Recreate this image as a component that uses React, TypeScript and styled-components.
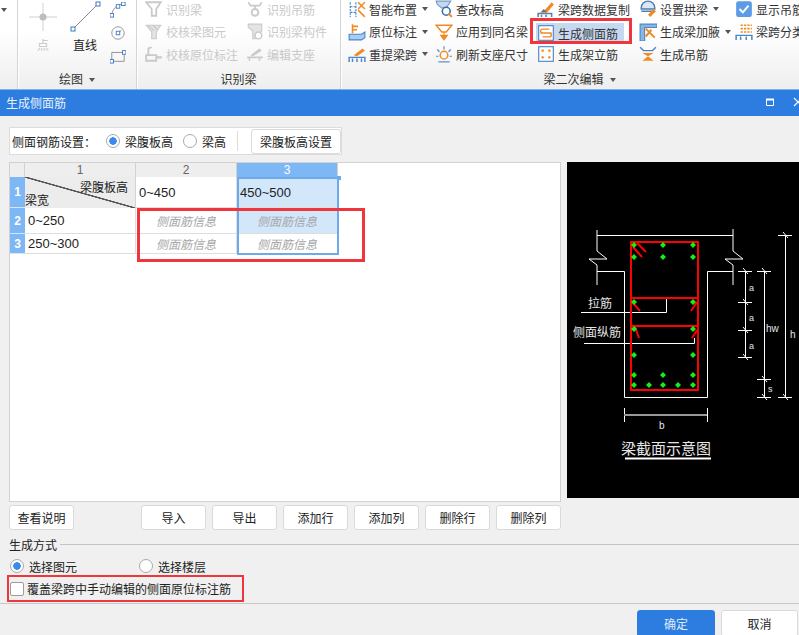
import React from 'react';
import styled, { createGlobalStyle } from 'styled-components';

const CJK = `"Liberation Sans", "Noto Sans CJK SC", sans-serif`;

const GlobalStyle = createGlobalStyle`
  html, body { margin: 0; padding: 0; background: #f0f0f0; }
  * { box-sizing: border-box; }
`;

const Page = styled.div`
  width: 799px;
  height: 635px;
  overflow: hidden;
  display: flex;
  flex-direction: column;
  font-family: ${CJK};
  font-size: 12px;
  color: #222;
  background: #f0f0f0;
`;

// ---- ribbon ----
const Ribbon = styled.div`
  height: 89px;
  display: flex;
  background: linear-gradient(#ffffff 35%, #eeeeee);
`;

const Group = styled.div<{ $w: number }>`
  width: ${(p) => p.$w}px;
  flex: none;
  display: flex;
  flex-direction: column;
  border-right: 1px solid #d4d4d4;
  box-shadow: 1px 0 0 #fff;
  &:last-child { border-right: 0; box-shadow: none; }
`;

const GroupBody = styled.div<{ $pad?: number }>`
  flex: 1;
  display: flex;
  min-height: 0;
  padding-left: ${(p) => p.$pad ?? 0}px;
`;

const GroupLabel = styled.div<{ $shift?: number }>`
  height: 20px;
  margin-bottom: -1px;
  padding-left: ${(p) => p.$shift ?? 0}px;
  display: flex;
  align-items: center;
  justify-content: center;
  gap: 6px;
  color: #333;
  line-height: 20px;
`;

const Caret = styled.span`
  width: 0;
  height: 0;
  border-left: 3px solid transparent;
  border-right: 3px solid transparent;
  border-top: 4px solid #555;
  flex: none;
`;

const ItemCaret = styled(Caret)`
  margin-left: 2px;
`;

const Col = styled.div<{ $w: number }>`
  width: ${(p) => p.$w}px;
  flex: none;
  margin-top: -1px;
  display: grid;
  grid-auto-rows: 22.5px;
  align-content: start;
`;

const Item = styled.div<{ $off?: boolean; $active?: boolean }>`
  position: relative;
  display: flex;
  align-items: center;
  gap: 3px;
  height: 20px;
  white-space: nowrap;
  color: ${(p) => (p.$off ? '#c9c9c9' : '#333')};
  ${(p) => p.$active && `
    background: #c6d9f1;
    margin: 1.5px 0 0 -1px;
    width: 88px;
    padding-left: 1px;
    &::after {
      content: '';
      position: absolute;
      left: -6px; right: -8px; top: -5px; bottom: -1px;
      border: 3px solid #f0363d;
    }
  `}
`;

const ItemIcon = styled.svg`
  flex: none;
`;

const PointTool = styled.div`
  width: 42px;
  display: flex;
  flex-direction: column;
  align-items: center;
  gap: 2px;
  color: #c4c4c4;
`;

const LineTool = styled(PointTool)`
  color: #222;
`;

const MiniTools = styled.div`
  margin-left: 4px;
  display: flex;
  flex-direction: column;
  gap: 7px;
  padding-top: 2px;
`;

// ---- title bar ----
const TitleBar = styled.div`
  height: 27px;
  flex: none;
  background: #2d7de0;
  border-top: 1px solid #7fb2ee;
  color: #e8f1fc;
  padding: 0 0 2px 6px;
  display: flex;
  align-items: center;
  justify-content: space-between;
`;

const WindowButtons = styled.div`
  display: flex;
  align-items: center;
  gap: 18px;
  margin-right: -4px;
`;

// ---- dialog body ----
const Body = styled.div`
  flex: 1;
  padding: 11px 0 0 9px;
  display: flex;
  flex-direction: column;
  min-height: 0;
`;

const SettingBox = styled.div`
  width: 333px;
  height: 28px;
  flex: none;
  background: #fff;
  border: 1px solid #dcdcdc;
  display: flex;
  align-items: center;
  padding-left: 2px;
`;

const SettingLabel = styled.span`
  width: 94px;
  flex: none;
`;

const RadioLabel = styled.label<{ $w: number }>`
  width: ${(p) => p.$w}px;
  flex: none;
  display: flex;
  align-items: center;
  gap: 5px;
  white-space: nowrap;
`;

const RadioDot = styled.span<{ $on?: boolean }>`
  width: 14px;
  height: 14px;
  flex: none;
  border-radius: 50%;
  border: 1px solid #a9a9a9;
  background: ${(p) => (p.$on ? 'radial-gradient(circle, #3a8af0 0 3.5px, #fff 4px)' : '#fff')};
`;

const Divider = styled.span`
  width: 1px;
  height: 20px;
  background: #dcdcdc;
  margin: 0 13px 0 0;
  flex: none;
`;

const Button = styled.button<{ $w?: number; $primary?: boolean }>`
  width: ${(p) => p.$w ?? 65}px;
  height: 25px;
  flex: none;
  padding: 0;
  font: inherit;
  color: ${(p) => (p.$primary ? '#dfeafa' : '#222')};
  background: ${(p) => (p.$primary ? '#2d7de0' : '#fff')};
  border: 1px solid ${(p) => (p.$primary ? '#2d7de0' : '#dadada')};
  border-radius: 3px;
`;

const MainRow = styled.div`
  margin-top: 7px;
  height: 340px;
  flex: none;
  display: flex;
  gap: 6px;
`;

const TablePanel = styled.div`
  position: relative;
  width: 552px;
  flex: none;
  background: #fff;
  border: 1px solid #d2d2d2;
`;

const Grid = styled.div`
  display: grid;
  grid-template-columns: 15px 111px 101px 101px;
  grid-template-rows: 14px 31px 26px 20px;
  width: 328px;
  font-size: 13px;
`;

const ColHead = styled.div<{ $on?: boolean }>`
  display: flex;
  align-items: center;
  justify-content: center;
  font-size: 12px;
  color: ${(p) => (p.$on ? '#fff' : '#666')};
  background: ${(p) => (p.$on ? '#7db7f5' : '#eeeeee')};
  border-right: 1px solid #d2d2d2;
`;

const RowHead = styled.div`
  display: flex;
  align-items: center;
  justify-content: center;
  background: #7db7f5;
  color: #fff;
  font-weight: bold;
  font-size: 12px;
  border-bottom: 1px solid #d6e6f8;
`;

const Corner = styled.div`
  position: relative;
  background:
    linear-gradient(to top right, transparent calc(50% - 1px), #555 calc(50% - 0.5px), #555 calc(50% + 0.5px), transparent calc(50% + 1px)),
    #ececec;
  border-right: 1px solid #d2d2d2;
  font-size: 12px;
`;

const CornerTop = styled.span`
  position: absolute;
  right: 7px;
  top: 1px;
`;

const CornerBottom = styled.span`
  position: absolute;
  left: 0;
  bottom: 0;
`;

const Cell = styled.div<{ $on?: boolean; $hint?: boolean }>`
  display: flex;
  align-items: center;
  justify-content: ${(p) => (p.$hint ? 'center' : 'flex-start')};
  padding-left: ${(p) => (p.$hint ? 0 : 3)}px;
  background: ${(p) => (p.$on ? '#d3e7fb' : '#fff')};
  border-right: 1px solid #dedede;
  border-bottom: 1px solid #dedede;
  color: ${(p) => (p.$hint ? '#a6a6a6' : '#222')};
  font-style: ${(p) => (p.$hint ? 'italic' : 'normal')};
  font-size: ${(p) => (p.$hint ? 12 : 13)}px;
`;

const Selection = styled.div`
  position: absolute;
  left: 227px;
  top: 14px;
  width: 102px;
  height: 78px;
  border: 2px solid #6ea9ec;
  &::after {
    content: '';
    position: absolute;
    right: -4px;
    top: -3px;
    width: 4px;
    height: 4px;
    background: #6ea9ec;
  }
`;

const RedMark = styled.div`
  position: absolute;
  left: 127px;
  top: 45px;
  width: 228px;
  height: 54px;
  border: 3px solid #f0363d;
`;

const Diagram = styled.svg`
  width: 232px;
  height: 336px;
  flex: none;
  background: #000;
  display: block;
`;

const DiagramText = styled.g`
  font-family: ${CJK};
  fill: #e6e6e6;
`;

const ButtonRow = styled.div`
  margin-top: 3px;
  width: 552px;
  flex: none;
  display: flex;
  gap: 6px;
`;

const ExplainButton = styled(Button)`
  margin-right: 61px;
`;

const Section = styled.div`
  margin-top: 4px;
  height: 20px;
  flex: none;
  display: flex;
  align-items: center;
  gap: 3px;
  &::after {
    content: '';
    flex: 1;
    height: 1px;
    background: #c4c4c4;
  }
`;

const ModeRow = styled.div`
  margin-top: 2px;
  height: 20px;
  flex: none;
  display: flex;
  align-items: center;
  padding-left: 1px;
`;

const CheckRow = styled.label`
  margin: -1px 0 0 -2px;
  width: 237px;
  height: 27px;
  flex: none;
  border: 2px solid #f0363d;
  display: flex;
  align-items: center;
  gap: 3px;
  padding-left: 1px;
  white-space: nowrap;
`;

const CheckBox = styled.span`
  width: 14px;
  height: 14px;
  flex: none;
  background: #fff;
  border: 1px solid #9c9c9c;
  border-radius: 2px;
`;

const Footer = styled.div`
  margin: 1px 0 0 -9px;
  flex: 1;
  border-top: 1px solid #c8c8c8;
  padding: 6px 1px 0 0;
  display: flex;
  justify-content: flex-end;
  gap: 6px;
`;

const FooterButton = styled(Button)`
  height: 27px;
`;

// ---- ribbon icons ----
const BLUE = '#4a86c8';
const ORANGE = '#f08a24';
const GREY = '#c9c9c9';

const icons: Record<string, React.ReactNode> = {
  funnel: <path d="M1 2h13l-4 6v6H6V8z" fill="none" stroke={GREY} strokeWidth="1.6" />,
  hook: <><path d="M2 2l2 3h8l2-3M8 5v3" fill="none" stroke={GREY} strokeWidth="1.4" /><circle cx="8" cy="11" r="3" fill="none" stroke={GREY} strokeWidth="1.6" /></>,
  funnelCheck: <><path d="M1 2h13l-4 6v6H6V8z" fill="#e4e4e4" stroke={GREY} /><path d="M3 2l5 5M7 2l4 4" stroke={GREY} /></>,
  scan: <><path d="M2 1h12v6l-5 7H6V7L2 4z" fill="#e4e4e4" stroke={GREY} /><circle cx="11" cy="11" r="3" fill="#fff" stroke={GREY} strokeWidth="1.4" /></>,
  origin: <><path d="M1 14V9h9v5zM3 9V3l3-1" fill="none" stroke={GREY} strokeWidth="1.6" /><path d="M10 11h5" stroke={GREY} strokeWidth="2" /></>,
  edit: <><path d="M1 11h14M3 14v-2M12 14v-2" stroke={GREY} strokeWidth="1.4" /><path d="M4 9l8-6 2 2-8 5z" fill={GREY} /></>,
  smart: <><path d="M2 2v13M7 2v13M2 6h6M2 11h6" stroke={BLUE} strokeDasharray="2 1" /><path d="M9 2l6 6M15 2L9 8M9 9l6 6" stroke={ORANGE} strokeWidth="1.4" /></>,
  mark: <><path d="M1 10h11l3-2v5l-3 2H1z" fill="#a9cdf0" stroke={BLUE} /><path d="M4 9V1M4 3h5M4 6h4" stroke={ORANGE} strokeWidth="1.4" /></>,
  lift: <><path d="M1 15v-4h14v4M4 15v-3M8 15v-3M12 15v-3" fill="none" stroke={BLUE} strokeWidth="1.3" /><path d="M5 9l8-6 2 2-7 5z" fill={ORANGE} /></>,
  check: <><path d="M1 1h13l-4 6H6L2 4z" fill="#c5d8ee" stroke="#7a9cc4" /><circle cx="10" cy="10" r="3.5" fill="#fff" stroke="#2f6fb0" strokeWidth="1.4" /><path d="M12 12l3 3" stroke={ORANGE} strokeWidth="1.8" /></>,
  apply: <><path d="M1 2h14l-5 6H6z" fill="#fff" stroke={ORANGE} strokeWidth="1.3" /><path d="M8 8v3M5 11h6l-3 4z" fill={ORANGE} stroke={ORANGE} /></>,
  refresh: <><circle cx="8" cy="9" r="3.4" fill="none" stroke={ORANGE} strokeWidth="1.3" /><path d="M8 1v3M2 4l2 2M14 4l-2 2M1 10h2M13 10h2" stroke={BLUE} /><path d="M3 15h10" stroke={BLUE} /></>,
  brush: <><path d="M1 15v-3h12v3M4 15v-2M8 15v-2" fill="none" stroke="#5f7fa5" strokeWidth="1.4" /><path d="M6 10l7-8 2 2-6 7z" fill={ORANGE} /><path d="M3 11l3-3 3 3z" fill="#6f6f6f" /></>,
  side: <><rect x="1.5" y="1.5" width="13" height="13" fill="#fff" stroke={BLUE} /><path d="M11 4.5H5a1.5 1.5 0 0 0 0 3.5h6a1.5 1.5 0 0 1 0 3.5H5M5 8H3M11 8h2" fill="none" stroke={ORANGE} strokeWidth="1.2" /></>,
  stand: <><rect x="1.5" y="1.5" width="13" height="13" fill="#fff" stroke={BLUE} /><path d="M5 4v2M5 10v2M11 4v2M11 10v2" stroke={ORANGE} strokeWidth="2" /></>,
  arch: <><path d="M2 7a6 6 0 0 1 12 0v1H2zM2 10h12" fill="#dbe7f3" stroke="#4f7fae" strokeWidth="1.3" /><path d="M8 13l5-5 2 2-5 5z" fill={ORANGE} /></>,
  haunch: <><path d="M1 1h15v3H5v12H1z" fill="#8eb6dc" stroke={BLUE} /><path d="M6 5l8 8M6 12l5-6" stroke={ORANGE} strokeWidth="1.8" /></>,
  hanger: <><path d="M1 2l3 3h8l3-3" fill="none" stroke={BLUE} strokeWidth="1.3" /><path d="M3 7l5 3 5-3M3 14h10l-5-4z" fill={ORANGE} /></>,
  tick: <><rect x="1" y="1" width="14" height="14" rx="2" fill="#5c9ce6" /><path d="M4 8l3 3 5-6" fill="none" stroke="#fff" strokeWidth="1.8" /></>,
  split: <><path d="M5 2h10M5 5h10M5 8h10" stroke={ORANGE} strokeWidth="1.5" strokeDasharray="2 1" /><path d="M1 15v-4h14v4M5 15v-3M10 15v-3" fill="none" stroke={BLUE} strokeWidth="1.3" /></>,
};

const Icon = ({ name }: { name: string }) => (
  <ItemIcon width="18" height="18" viewBox="0 0 16 16">{icons[name]}</ItemIcon>
);

const Handle = ({ x, y }: { x: number; y: number }) => (
  <rect x={x - 2} y={y - 2} width="4" height="4" fill="#fff" stroke="#3a78c8" />
);

const RibbonCol = ({ w, items }: { w: number; items: [string, string, boolean?][] }) => (
  <Col $w={w}>
    {items.map(([icon, label, caret]) => (
      <Item key={label} $active={label === '生成侧面筋'}>
        <Icon name={icon} />
        {label}
        {caret && <ItemCaret />}
      </Item>
    ))}
  </Col>
);

const OffCol = ({ w, items }: { w: number; items: [string, string][] }) => (
  <Col $w={w}>
    {items.map(([icon, label]) => (
      <Item key={label} $off>
        <Icon name={icon} />
        {label}
      </Item>
    ))}
  </Col>
);

// ---- beam section drawing, coordinates are the ones of the window ----
const dots: [number, number][] = [
  [634, 245], [663, 245], [693, 245], [634, 257], [663, 257], [693, 257],
  [634, 302], [693, 302], [634, 329], [693, 329], [634, 355], [693, 355],
  [634, 375], [663, 375], [693, 375],
  [634, 385], [649, 385], [663, 385], [678, 385], [693, 385],
];

const ticks: [number, number, number][] = [
  [745, 271, 7], [745, 302, 7], [745, 330, 7], [745, 357, 7],
  [764, 271, 7], [764, 379, 7], [764, 397, 7],
  [785, 235, 7], [785, 397, 7],
];

const BeamDiagram = () => (
  <Diagram viewBox="567 162 232 336">
    <g fill="none" stroke="#fff" strokeWidth="1">
      <path d="M597 230V251L607 259H589L597 265V285M597 235.5H733M733 229V251L743 259H725L733 265V285" />
      <path d="M597 271.5H624.5V397.5H707.5V271.5H733" />
      <path d="M581 312.5H666.5V298M584 343.5H694.5V338" />
      <path d="M745.5 271V357M764.5 271V397M785.5 235V397" />
      <path d="M624.5 408V422M707.5 408V422" />
      {ticks.map(([x, y, r]) => (
        <path key={`${x}-${y}`} d={`M${x - r} ${y + 0.5}H${x + r}M${x - 2} ${y - 3}L${x + 3} ${y + 3}`} />
      ))}
      <path d="M625 458.5H711" strokeWidth="2" />
    </g>
    <path d="M624 415H707" stroke="#999" strokeWidth="2" />
    <g fill="none" stroke="#f00" strokeWidth="2">
      <rect x="631" y="242" width="67" height="148" />
      <path d="M631 298H698M631 326H698" />
      <path d="M637 243L646 252M633 247L642 257M633 303L640 311M697 302L691 311M635 327L639 338M697 330L692 338" />
    </g>
    {dots.map(([x, y]) => (
      <path key={`${x}-${y}`} d={`M${x} ${y - 3}L${x + 3} ${y}L${x} ${y + 3}L${x - 3} ${y}Z`} fill="#14f014" />
    ))}
    <DiagramText fontSize="12">
      <text x="588" y="308">拉筋</text>
      <text x="573" y="337">侧面纵筋</text>
      <text x="749" y="291" fontSize="9">a</text>
      <text x="749" y="321" fontSize="9">a</text>
      <text x="749" y="349" fontSize="9">a</text>
      <text x="766" y="332" fontSize="10">hw</text>
      <text x="768" y="392" fontSize="9">s</text>
      <text x="790" y="338" fontSize="10">h</text>
      <text x="659" y="429" fontSize="10">b</text>
      <text x="621" y="454" fontSize="15">梁截面示意图</text>
    </DiagramText>
  </Diagram>
);

export default function App() {
  return (
    <Page>
      <GlobalStyle />
      <Ribbon>
        <Group $w={18}>
          <svg width="8" height="20" viewBox="0 0 8 20"><path d="M1 8h6l-3 4z" fill="#555" /></svg>
        </Group>
        <Group $w={119}>
          <GroupBody $pad={4}>
            <PointTool>
              <svg width="30" height="34" viewBox="0 0 30 34">
                <path d="M1 17H29M15 3V31" stroke="#d0d0d0" strokeWidth="1" />
                <circle cx="15" cy="17" r="3.5" fill="#bdbdbd" />
              </svg>
              点
            </PointTool>
            <LineTool>
              <svg width="34" height="34" viewBox="0 0 34 34">
                <path d="M5 29L30 4" stroke="#8a8a8a" strokeWidth="1" />
                <Handle x={5} y={29} />
                <Handle x={30} y={4} />
              </svg>
              直线
            </LineTool>
            <MiniTools>
              <svg width="16" height="16" viewBox="0 0 18 18">
                <path d="M2 15C2 8 8 3 15 2" fill="none" stroke="#8a8a8a" />
                <Handle x={2} y={15} />
                <Handle x={9} y={5} />
                <Handle x={15} y={2} />
              </svg>
              <svg width="16" height="16" viewBox="0 0 18 18">
                <circle cx="9" cy="9" r="7" fill="none" stroke="#8a8a8a" />
                <path d="M9 9L13 6" stroke="#8a8a8a" />
                <Handle x={9} y={9} />
              </svg>
              <svg width="16" height="16" viewBox="0 0 18 18">
                <path d="M2 5H16V15H2Z" fill="none" stroke="#8a8a8a" />
                <Handle x={2} y={15} />
                <Handle x={16} y={5} />
              </svg>
            </MiniTools>
          </GroupBody>
          <GroupLabel>绘图<Caret /></GroupLabel>
        </Group>
        <Group $w={204}>
          <GroupBody $pad={8}>
            <OffCol w={101} items={[['funnel', '识别梁'], ['funnelCheck', '校核梁图元'], ['origin', '校核原位标注']]} />
            <OffCol w={95} items={[['hook', '识别吊筋'], ['scan', '识别梁构件'], ['edit', '编辑支座']]} />
          </GroupBody>
          <GroupLabel>识别梁</GroupLabel>
        </Group>
        <Group $w={458}>
          <GroupBody $pad={7}>
            <RibbonCol w={87} items={[['smart', '智能布置', true], ['mark', '原位标注', true], ['lift', '重提梁跨', true]]} />
            <RibbonCol w={102} items={[['check', '查改标高'], ['apply', '应用到同名梁'], ['refresh', '刷新支座尺寸']]} />
            <RibbonCol w={102} items={[['brush', '梁跨数据复制'], ['side', '生成侧面筋'], ['stand', '生成架立筋']]} />
            <RibbonCol w={96} items={[['arch', '设置拱梁', true], ['haunch', '生成梁加腋', true], ['hanger', '生成吊筋']]} />
            <RibbonCol w={63} items={[['tick', '显示吊筋'], ['split', '梁跨分类']]} />
          </GroupBody>
          <GroupLabel $shift={19}>梁二次编辑<Caret /></GroupLabel>
        </Group>
      </Ribbon>

      <TitleBar>
        生成侧面筋
        <WindowButtons>
          <svg width="10" height="10" viewBox="0 0 10 10"><path d="M1.5 2.5H8.5V8.5H1.5Z" fill="none" stroke="#fff" /><path d="M1 2.5H9" stroke="#fff" strokeWidth="2" /></svg>
          <svg width="10" height="10" viewBox="0 0 10 10"><path d="M1 1L9 9M9 1L1 9" stroke="#fff" strokeWidth="1.2" /></svg>
        </WindowButtons>
      </TitleBar>

      <Body>
        <SettingBox>
          <SettingLabel>侧面钢筋设置：</SettingLabel>
          <RadioLabel $w={77}><RadioDot $on />梁腹板高</RadioLabel>
          <RadioLabel $w={54}><RadioDot />梁高</RadioLabel>
          <Divider />
          <Button $w={90}>梁腹板高设置</Button>
        </SettingBox>

        <MainRow>
          <TablePanel>
            <Grid>
              <ColHead />
              <ColHead>1</ColHead>
              <ColHead>2</ColHead>
              <ColHead $on>3</ColHead>

              <RowHead>1</RowHead>
              <Corner>
                <CornerTop>梁腹板高</CornerTop>
                <CornerBottom>梁宽</CornerBottom>
              </Corner>
              <Cell>0~450</Cell>
              <Cell $on>450~500</Cell>

              <RowHead>2</RowHead>
              <Cell>0~250</Cell>
              <Cell $hint>侧面筋信息</Cell>
              <Cell $hint $on>侧面筋信息</Cell>

              <RowHead>3</RowHead>
              <Cell>250~300</Cell>
              <Cell $hint>侧面筋信息</Cell>
              <Cell $hint>侧面筋信息</Cell>
            </Grid>
            <Selection />
            <RedMark />
          </TablePanel>
          <BeamDiagram />
        </MainRow>

        <ButtonRow>
          <ExplainButton>查看说明</ExplainButton>
          <Button>导入</Button>
          <Button>导出</Button>
          <Button>添加行</Button>
          <Button>添加列</Button>
          <Button>删除行</Button>
          <Button>删除列</Button>
        </ButtonRow>

        <Section>生成方式</Section>

        <ModeRow>
          <RadioLabel $w={129}><RadioDot $on />选择图元</RadioLabel>
          <RadioLabel $w={90}><RadioDot />选择楼层</RadioLabel>
        </ModeRow>

        <CheckRow><CheckBox />覆盖梁跨中手动编辑的侧面原位标注筋</CheckRow>

        <Footer>
          <FooterButton $primary $w={78}>确定</FooterButton>
          <FooterButton $w={77}>取消</FooterButton>
        </Footer>
      </Body>
    </Page>
  );
}
